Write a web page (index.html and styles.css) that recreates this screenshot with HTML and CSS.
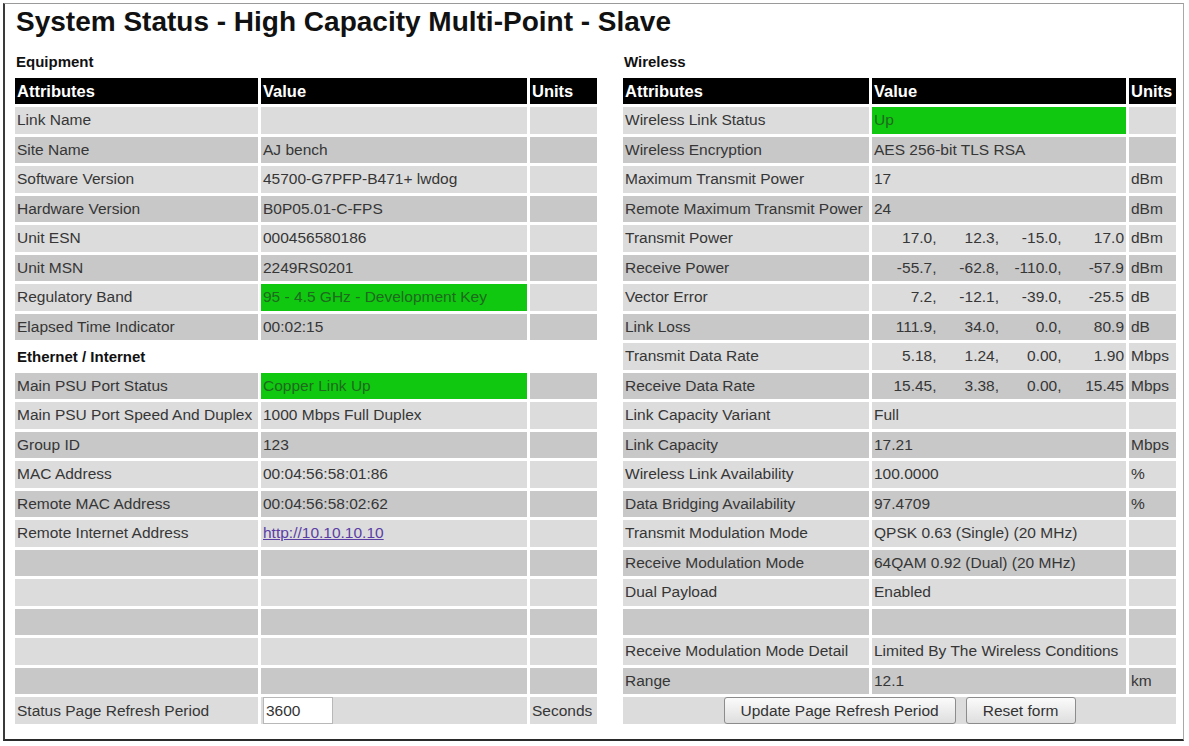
FILE: index.html
```html
<!DOCTYPE html>
<html>
<head>
<meta charset="utf-8">
<title>System Status</title>
<link rel="stylesheet" href="styles.css">
</head>
<body>
<div class="frame">
  <h1 class="title">System Status - High Capacity Multi-Point - Slave</h1>
  <div class="columns">
    <section class="panel panel-left">
      <h2 class="section">Equipment</h2>
      <table class="grid grid-left">
        <colgroup><col class="c-attr-l"><col class="c-val-l"><col class="c-unit-l"></colgroup>
        <tr class="head"><th>Attributes</th><th>Value</th><th>Units</th></tr>
        <tr class="l"><td>Link Name</td><td></td><td></td></tr>
        <tr class="d"><td>Site Name</td><td>AJ bench</td><td></td></tr>
        <tr class="l"><td>Software Version</td><td>45700-G7PFP-B471+ lwdog</td><td></td></tr>
        <tr class="d"><td>Hardware Version</td><td>B0P05.01-C-FPS</td><td></td></tr>
        <tr class="l"><td>Unit ESN</td><td>000456580186</td><td></td></tr>
        <tr class="d"><td>Unit MSN</td><td>2249RS0201</td><td></td></tr>
        <tr class="l"><td>Regulatory Band</td><td class="ok">95 - 4.5 GHz - Development Key</td><td></td></tr>
        <tr class="d"><td>Elapsed Time Indicator</td><td>00:02:15</td><td></td></tr>
        <tr class="sub"><td colspan="3">Ethernet / Internet</td></tr>
        <tr class="d"><td>Main PSU Port Status</td><td class="ok">Copper Link Up</td><td></td></tr>
        <tr class="l"><td>Main PSU Port Speed And Duplex</td><td>1000 Mbps Full Duplex</td><td></td></tr>
        <tr class="d"><td>Group ID</td><td>123</td><td></td></tr>
        <tr class="l"><td>MAC Address</td><td>00:04:56:58:01:86</td><td></td></tr>
        <tr class="d"><td>Remote MAC Address</td><td>00:04:56:58:02:62</td><td></td></tr>
        <tr class="l"><td>Remote Internet Address</td><td><a class="link" href="#">http://10.10.10.10</a></td><td></td></tr>
        <tr class="d"><td></td><td></td><td></td></tr>
        <tr class="l"><td></td><td></td><td></td></tr>
        <tr class="d"><td></td><td></td><td></td></tr>
        <tr class="l"><td></td><td></td><td></td></tr>
        <tr class="d"><td></td><td></td><td></td></tr>
        <tr class="l"><td>Status Page Refresh Period</td><td><input class="period" type="text" value="3600"></td><td>Seconds</td></tr>
      </table>
    </section>
    <section class="panel panel-right">
      <h2 class="section">Wireless</h2>
      <table class="grid grid-right">
        <colgroup><col class="c-attr-r"><col class="c-val-r"><col class="c-unit-r"></colgroup>
        <tr class="head"><th>Attributes</th><th>Value</th><th>Units</th></tr>
        <tr class="l"><td>Wireless Link Status</td><td class="ok">Up</td><td></td></tr>
        <tr class="d"><td>Wireless Encryption</td><td>AES 256-bit TLS RSA</td><td></td></tr>
        <tr class="l"><td>Maximum Transmit Power</td><td>17</td><td>dBm</td></tr>
        <tr class="d"><td>Remote Maximum Transmit Power</td><td>24</td><td>dBm</td></tr>
        <tr class="l"><td>Transmit Power</td><td><div class="quad"><span>17.0,</span><span>12.3,</span><span>-15.0,</span><span>17.0</span></div></td><td>dBm</td></tr>
        <tr class="d"><td>Receive Power</td><td><div class="quad"><span>-55.7,</span><span>-62.8,</span><span>-110.0,</span><span>-57.9</span></div></td><td>dBm</td></tr>
        <tr class="l"><td>Vector Error</td><td><div class="quad"><span>7.2,</span><span>-12.1,</span><span>-39.0,</span><span>-25.5</span></div></td><td>dB</td></tr>
        <tr class="d"><td>Link Loss</td><td><div class="quad"><span>111.9,</span><span>34.0,</span><span>0.0,</span><span>80.9</span></div></td><td>dB</td></tr>
        <tr class="l"><td>Transmit Data Rate</td><td><div class="quad"><span>5.18,</span><span>1.24,</span><span>0.00,</span><span>1.90</span></div></td><td>Mbps</td></tr>
        <tr class="d"><td>Receive Data Rate</td><td><div class="quad"><span>15.45,</span><span>3.38,</span><span>0.00,</span><span>15.45</span></div></td><td>Mbps</td></tr>
        <tr class="l"><td>Link Capacity Variant</td><td>Full</td><td></td></tr>
        <tr class="d"><td>Link Capacity</td><td>17.21</td><td>Mbps</td></tr>
        <tr class="l"><td>Wireless Link Availability</td><td>100.0000</td><td>%</td></tr>
        <tr class="d"><td>Data Bridging Availability</td><td>97.4709</td><td>%</td></tr>
        <tr class="l"><td>Transmit Modulation Mode</td><td>QPSK 0.63 (Single) (20 MHz)</td><td></td></tr>
        <tr class="d"><td>Receive Modulation Mode</td><td>64QAM 0.92 (Dual) (20 MHz)</td><td></td></tr>
        <tr class="l"><td>Dual Payload</td><td>Enabled</td><td></td></tr>
        <tr class="d"><td></td><td></td><td></td></tr>
        <tr class="l"><td>Receive Modulation Mode Detail</td><td>Limited By The Wireless Conditions</td><td></td></tr>
        <tr class="d"><td>Range</td><td>12.1</td><td>km</td></tr>
        <tr class="l"><td colspan="3" class="actions"><button class="btn" type="button">Update Page Refresh Period</button><button class="btn" type="button">Reset form</button></td></tr>
      </table>
    </section>
  </div>
</div>
</body>
</html>
```
FILE: styles.css
```css
html, body {
  margin: 0;
  padding: 0;
  background: #ffffff;
}

body {
  font-family: "Liberation Sans", Arial, sans-serif;
  font-size: 15.5px;
  color: #363636;
}

.frame {
  box-sizing: border-box;
  margin: 3px 5px 0 3px;
  height: 738px;
  border-top: 1px solid #9a9a9a;
  border-right: 1px solid #a8a8a8;
  border-left: 2px solid #3a3a3a;
  border-bottom: 2px solid #2a2a2a;
  padding: 2px 0 0 7px;
}

.title {
  margin: 0;
  font-size: 28px;
  line-height: 32px;
  font-weight: bold;
  color: #111111;
  padding-left: 4px;
}

.columns {
  display: flex;
  gap: 20px;
  align-items: flex-start;
}

.section {
  margin: 15px 0 4px 0;
  padding-left: 4px;
  font-size: 15px;
  line-height: 18px;
  font-weight: bold;
  color: #111111;
}

.grid {
  border-collapse: separate;
  border-spacing: 3px;
  table-layout: fixed;
}

.grid-left { width: 588px; }
.grid-right { width: 559px; }

.c-attr-l { width: 243px; }
.c-val-l { width: 266px; }
.c-unit-l { width: 67px; }

.c-attr-r { width: 246px; }
.c-val-r { width: 254px; }
.c-unit-r { width: 47px; }

.grid th,
.grid td {
  padding: 0 2px;
  white-space: nowrap;
  overflow: hidden;
  text-align: left;
  vertical-align: middle;
}

.grid th {
  height: 26px;
  background: #000000;
  color: #ffffff;
  font-weight: bold;
  font-size: 16.5px;
}

.grid td {
  height: 26.5px;
}

.grid tr.l td { background: #dcdcdc; }
.grid tr.d td { background: #c8c8c8; }

.grid tr.sub td {
  background: #ffffff;
  font-weight: bold;
  color: #111111;
  font-size: 15px;
}

.grid tr td.ok {
  background: #10c810;
  color: #1f6a1f;
}

.link {
  color: #5a3ea6;
  text-decoration: underline;
}

.quad {
  display: flex;
}

.quad span {
  flex: 1 1 0;
  text-align: right;
}

.period {
  box-sizing: border-box;
  width: 70px;
  height: 27px;
  border: 1px solid #b8b8b8;
  background: #ffffff;
  font-family: "Liberation Sans", Arial, sans-serif;
  font-size: 15.5px;
  color: #333333;
  padding: 0 2px;
  margin: 0;
}

.grid td.actions {
  text-align: center;
}

.btn {
  box-sizing: border-box;
  height: 27px;
  margin: 0 5px;
  padding: 0 16px;
  border: 1px solid #8c8c8c;
  border-radius: 3px;
  background: linear-gradient(#fbfbfb, #dedede);
  font-family: "Liberation Sans", Arial, sans-serif;
  font-size: 15.5px;
  color: #333333;
}
```
